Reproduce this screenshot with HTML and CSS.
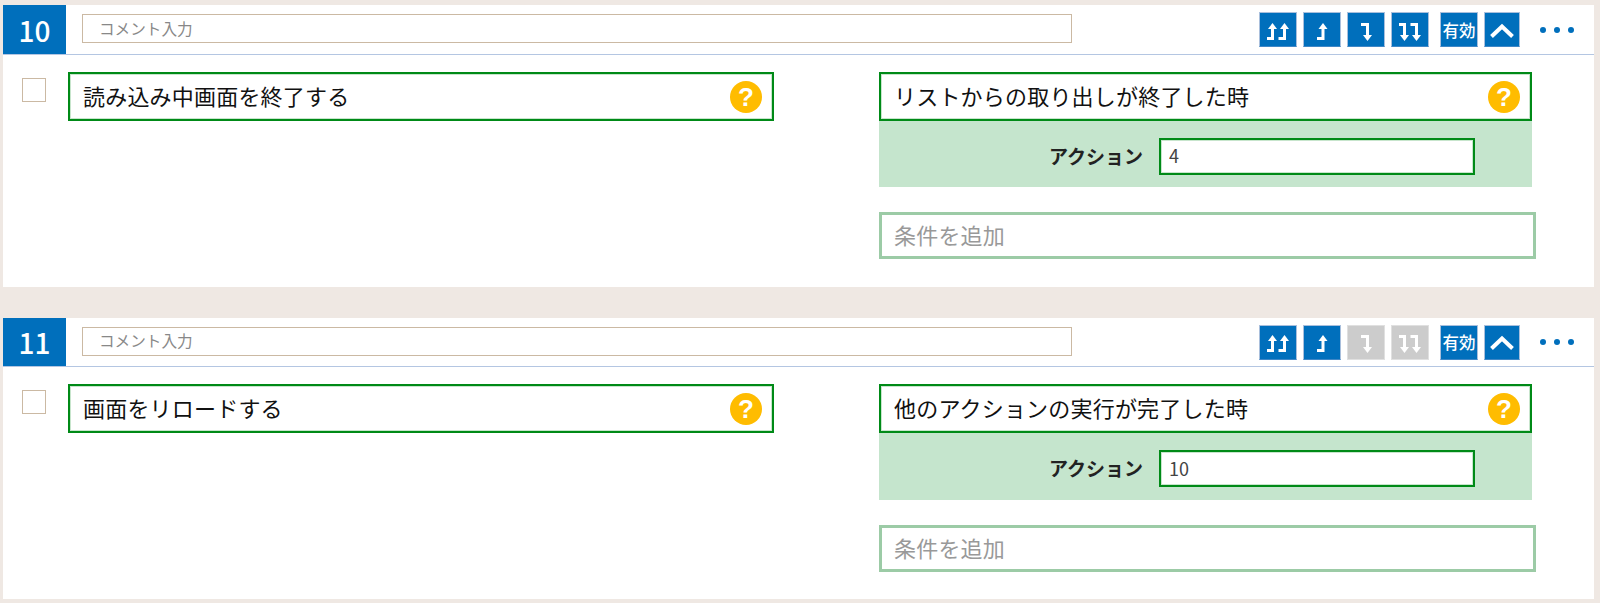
FILE: index.html
```html
<!DOCTYPE html>
<html lang="ja">
<head>
  <meta charset="UTF-8">
  <title>アクション一覧</title>
  <link rel="stylesheet" href="styles.css">
</head>
<body>
  <svg class="sprites" width="0" height="0">
    <symbol id="up1" viewBox="0 0 38 34"><path d="M14 25.500h6V15"/><path class="head" d="M20 10l4.500 6h-9z"/></symbol>
    <symbol id="down1" viewBox="0 0 38 34"><path d="M14 11.500h6.500V22"/><path class="head" d="M20.500 28l4.500-6h-9z"/></symbol>
    <symbol id="up2" viewBox="0 0 38 34"><path d="M8 25.500h5.500V15"/><path class="head" d="M13.500 10l4.500 6h-9z"/><path d="M19.500 25.500h6V15"/><path class="head" d="M25.500 10l4.500 6h-9z"/></symbol>
    <symbol id="down2" viewBox="0 0 38 34"><path d="M8 11.500h5.500V22"/><path class="head" d="M13.500 28l4.500-6h-9z"/><path d="M19.500 11.500h6V22"/><path class="head" d="M25.500 28l4.500-6h-9z"/></symbol>
  </svg>

  <section class="card">
    <header class="card-head">
      <div class="num">10</div>
      <input class="comment" type="text" placeholder="コメント入力">
      <div class="tools">
        <button class="tool"><svg><use href="#up2"/></svg></button>
        <button class="tool"><svg><use href="#up1"/></svg></button>
        <button class="tool"><svg><use href="#down1"/></svg></button>
        <button class="tool"><svg><use href="#down2"/></svg></button>
        <button class="tool tool-text">有効</button>
        <button class="tool tool-fold"><svg viewBox="0 0 36 34"><path class="chev" d="M7.500 23.500L18 13.500l10.500 10"/></svg></button>
        <div class="more"><i></i><i></i><i></i></div>
      </div>
    </header>
    <div class="card-body">
      <span class="check"></span>
      <div class="col-left">
        <div class="select"><span class="select-text">読み込み中画面を終了する</span><span class="help">?</span></div>
      </div>
      <div class="col-right">
        <div class="select"><span class="select-text">リストからの取り出しが終了した時</span><span class="help">?</span></div>
        <div class="param">
          <label>アクション</label>
          <input class="param-input" type="text" value="4">
        </div>
        <div class="add"><span>条件を追加</span></div>
      </div>
    </div>
  </section>

  <section class="card">
    <header class="card-head">
      <div class="num">11</div>
      <input class="comment" type="text" placeholder="コメント入力">
      <div class="tools">
        <button class="tool"><svg><use href="#up2"/></svg></button>
        <button class="tool"><svg><use href="#up1"/></svg></button>
        <button class="tool off"><svg><use href="#down1"/></svg></button>
        <button class="tool off"><svg><use href="#down2"/></svg></button>
        <button class="tool tool-text">有効</button>
        <button class="tool tool-fold"><svg viewBox="0 0 36 34"><path class="chev" d="M7.500 23.500L18 13.500l10.500 10"/></svg></button>
        <div class="more"><i></i><i></i><i></i></div>
      </div>
    </header>
    <div class="card-body">
      <span class="check"></span>
      <div class="col-left">
        <div class="select"><span class="select-text">画面をリロードする</span><span class="help">?</span></div>
      </div>
      <div class="col-right">
        <div class="select"><span class="select-text">他のアクションの実行が完了した時</span><span class="help">?</span></div>
        <div class="param">
          <label>アクション</label>
          <input class="param-input" type="text" value="10">
        </div>
        <div class="add"><span>条件を追加</span></div>
      </div>
    </div>
  </section>
</body>
</html>
```

FILE: styles.css
```css
* { box-sizing: border-box; margin: 0; padding: 0 }
body {
  font-family: "Noto Sans CJK JP", "Noto Sans", sans-serif;
  background: #efe8e3;
  color: #222;
  padding: 5px 6px 4px 3px;
  overflow: hidden;
}
.sprites { position: absolute; }
symbol path { fill: none; stroke: #fff; stroke-width: 3; }
symbol path.head { fill: #fff; stroke: none; }
.card {
  background: #fff;
  height: 282px;
}
.card + .card {
  height: 281px;
  margin-top: 31px;
}
.card-head {
  display: flex; align-items: center;
  height: 50px;
  border-bottom: 1px solid #b4c6e2;
}
.card + .card .card-head { height: 49px; }
.num {
  width: 63px; height: 100%;
  background: #006fbc;
  color: #fff;
  font-size: 28px; font-weight: 500;
  display: flex; align-items: center; justify-content: center;
  flex: none;
}
.comment {
  width: 990px; height: 29px;
  margin: 0 0 2px 16px;
  padding: 0 0 2px 16px;
  border: 1px solid #cbb9a3;
  font-family: inherit;
  font-size: 15.600px;
  outline: none;
}
.comment::placeholder { color: #888; }
.tools {
  display: flex; align-items: center;
  margin-left: 187px;
  height: 35px;
}
.tool {
  width: 38px; height: 35px;
  margin-right: 6px;
  background: #006fbc;
  border: 1px solid #a9bfdc;
  border-bottom-color: #3f87c6;
  color: #fff;
  display: flex; align-items: center; justify-content: center;
  flex: none;
}
.tool svg { width: 38px; height: 34px; flex: none; }
.tool path.chev { fill: none; stroke: #fff; stroke-width: 4; }
.tool:nth-child(4) { margin-right: 11px; }
.tool.off {
  background: #ccc;
  border-color: #e0e0e0;
}
.tool-text {
  font-family: inherit;
  font-size: 16.500px; font-weight: 500;
}
.tool-fold { width: 36px; margin-right: 0; }
.tool-fold svg { width: 36px; }
.more {
  display: flex; gap: 8px;
  margin-left: 20px;
}
.more i {
  width: 6px; height: 6px;
  border-radius: 50%;
  background: #006fbc;
}
.card-body {
  display: flex; align-items: flex-start;
  padding: 17px 0 0 19px;
}
.check {
  width: 24px; height: 24px;
  margin: 6px 22px 0 0;
  border: 1px solid #cbb9a3;
  flex: none;
}
.col-left { width: 706px; margin-right: 105px; flex: none; }
.col-right { width: 657px; flex: none; }
.select {
  display: flex; align-items: center; justify-content: space-between;
  height: 49px;
  padding: 0 10px 0 13px;
  border: 2px solid #008a17;
  box-shadow: inset 0 0 0 1px rgba(0,138,23,.22);
  background: #fff;
  font-size: 22px;
  letter-spacing: .2px;
  color: #111;
}
.select-text { margin-bottom: 4px; }
.col-right .select { width: 653px; }
.help {
  width: 32px; height: 32px;
  border-radius: 50%;
  background: #ffbc00;
  color: #fff;
  font: bold 26px/32px "Liberation Sans", sans-serif;
  letter-spacing: 0;
  text-align: center;
}
.param {
  display: flex; align-items: center;
  width: 653px; height: 66px;
  padding: 4px 0 0 168px;
  background: #c5e5cd;
}
.card + .card .param { height: 67px; }
.param label {
  width: 96px;
  margin: 0 16px 2px 0;
  font-size: 19px; font-weight: 700;
  text-align: right;
  white-space: nowrap;
}
.param-input {
  width: 316px; height: 37px;
  padding: 0 0 2px 8px;
  border: 2px solid #008a17;
  box-shadow: inset 0 0 0 1px rgba(0,138,23,.22);
  font-family: inherit;
  font-size: 18px;
  color: #444;
  outline: none;
}
.add {
  display: flex; align-items: center;
  height: 47px;
  margin-top: 25px;
  padding-left: 12px;
  border: 3px solid #9ccba6;
  font-size: 22px;
  letter-spacing: .2px;
  color: #999;
}
.add span { margin-bottom: 4px; }
```
